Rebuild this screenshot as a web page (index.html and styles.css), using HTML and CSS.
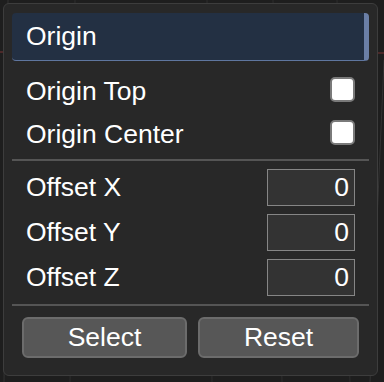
FILE: index.html
```html
<!DOCTYPE html>
<html lang="en">
<head>
  <meta charset="UTF-8" />
  <meta name="viewport" content="width=device-width, initial-scale=1.0" />
  <title>Origin</title>
  <link rel="stylesheet" href="styles.css">
</head>
<body>
  <svg class="viewport" width="384" height="382" viewBox="0 0 384 382">
    <line x1="8" y1="0" x2="4" y2="382" stroke="#333" />
    <line x1="75" y1="0" x2="70" y2="382" stroke="#2e2e2e" />
    <line x1="207" y1="0" x2="212" y2="382" stroke="#2e2e2e" />
    <line x1="273" y1="0" x2="282" y2="382" stroke="#2e2e2e" />
    <line x1="337" y1="0" x2="350" y2="382" stroke="#2e2e2e" />
    <line x1="0" y1="52" x2="384" y2="53" stroke="#7a3434" />
    <line x1="384" y1="60" x2="370" y2="382" stroke="#333" />
  </svg>

  <div class="panel">
    <div class="header">Origin</div>

    <label class="row check-row">
      <span class="label">Origin Top</span>
      <span class="checkbox"></span>
    </label>
    <label class="row check-row">
      <span class="label">Origin Center</span>
      <span class="checkbox"></span>
    </label>

    <hr class="sep first" />

    <div class="row num-row">
      <span>Offset X</span>
      <input class="num" type="text" value="0" />
    </div>
    <div class="row num-row">
      <span>Offset Y</span>
      <input class="num" type="text" value="0" />
    </div>
    <div class="row num-row">
      <span>Offset Z</span>
      <input class="num" type="text" value="0" />
    </div>

    <hr class="sep second" />

    <div class="buttons">
      <button>Select</button>
      <button>Reset</button>
    </div>
  </div>
</body>
</html>
```

FILE: styles.css
```css
body {
  margin: 0;
  width: 384px;
  height: 382px;
  overflow: hidden;
  background-color: #1e1e1e;
  font-family: "Liberation Sans", Arial, sans-serif;
  color: #ffffff;
  position: relative;
}
.viewport {
  position: absolute;
  left: 0;
  top: 0;
}
.panel {
  position: relative;
  margin: 3px 0 0 3px;
  width: 357px;
  padding: 9px 8px 17px 8px;
  background: #282828;
  border: 1px solid #3d3d3d;
  border-radius: 6px;
}
.header {
  height: 47px;
  line-height: 47px;
  padding-left: 14px;
  font-size: 26.5px;
  background: #233043;
  border-right: 5px solid #6b7fa6;
  border-bottom: 1px solid #5f769f;
  border-radius: 4px;
  margin-bottom: 7px;
}
.row {
  display: flex;
  align-items: center;
  justify-content: space-between;
  padding: 0 14px;
  font-size: 26.5px;
}
.check-row {
  height: 43px;
}
.check-row .label {
  padding-top: 3px;
}
.checkbox {
  width: 21px;
  height: 21px;
  background: #ffffff;
  border: 2px solid #7a7a7a;
  border-radius: 5px;
}
.num-row {
  height: 45px;
}
.num {
  box-sizing: border-box;
  width: 88px;
  height: 37px;
  background: #333333;
  border: 1px solid #868686;
  color: #ffffff;
  font-family: "Liberation Sans", Arial, sans-serif;
  font-size: 26.5px;
  text-align: right;
  padding: 0 5px 0 0;
  margin: 0;
}
.sep {
  border: none;
  height: 2px;
  background: #555555;
  margin: 0;
}
.sep.first {
  margin: 5px 0 4px;
}
.sep.second {
  margin: 4px 0 11px;
}
.buttons {
  display: grid;
  grid-template-columns: 165px 161px;
  gap: 11px;
  padding-left: 10px;
}
button {
  height: 41px;
  background: #575757;
  border: 2px solid #6c6c6c;
  border-radius: 6px;
  color: #ffffff;
  font-family: "Liberation Sans", Arial, sans-serif;
  font-size: 26.5px;
  padding: 0;
}
```
